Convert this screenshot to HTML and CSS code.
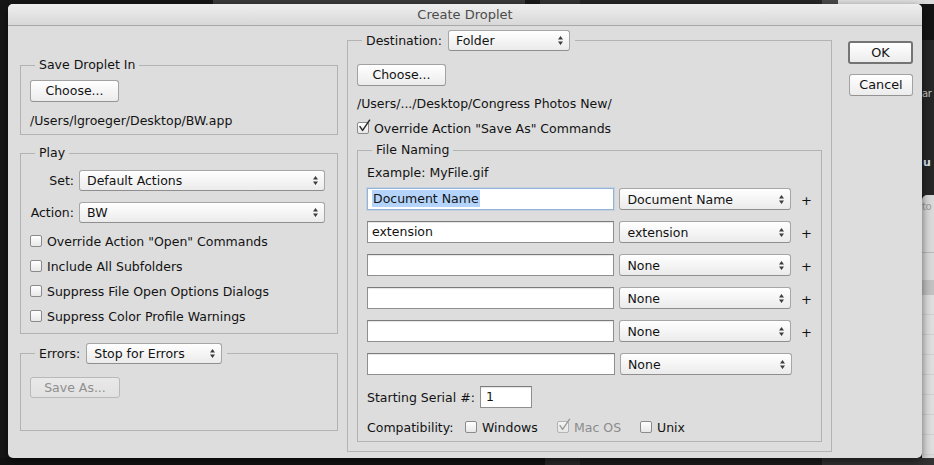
FILE: index.html
```html
<!DOCTYPE html>
<html>
<head>
<meta charset="utf-8">
<title>Create Droplet</title>
<link rel="stylesheet" href="styles.css">
</head>
<body>
<div class="dialog">
  <div class="titlebar">Create Droplet</div>
  <div class="content">
    <div class="leftcol">
      <fieldset class="group g-save">
        <legend class="lg">Save Droplet In</legend>
        <div class="btn choose">Choose...</div>
        <div class="line path1">/Users/lgroeger/Desktop/BW.app</div>
      </fieldset>

      <fieldset class="group g-play">
        <legend class="lg">Play</legend>
        <div class="frow r-set">
          <span class="flabel">Set:</span>
          <div class="popup p-set"><span class="val">Default Actions</span><svg class="updown" width="5" height="9" viewBox="0 0 5 9"><path d="M2.5 0L5 3.4H0z M2.5 9L5 5.6H0z" fill="#3c3c3c"/></svg></div>
        </div>
        <div class="frow r-action">
          <span class="flabel">Action:</span>
          <div class="popup p-set"><span class="val">BW</span><svg class="updown" width="5" height="9" viewBox="0 0 5 9"><path d="M2.5 0L5 3.4H0z M2.5 9L5 5.6H0z" fill="#3c3c3c"/></svg></div>
        </div>
        <div class="checks">
          <div class="crow"><span class="cb"></span><span>Override Action "Open" Commands</span></div>
          <div class="crow"><span class="cb"></span><span>Include All Subfolders</span></div>
          <div class="crow"><span class="cb"></span><span>Suppress File Open Options Dialogs</span></div>
          <div class="crow"><span class="cb"></span><span>Suppress Color Profile Warnings</span></div>
        </div>
      </fieldset>

      <fieldset class="group g-errors">
        <legend class="lg-ctl">
          <span class="elabel">Errors:</span>
          <div class="popup p-err"><span class="val">Stop for Errors</span><svg class="updown" width="5" height="9" viewBox="0 0 5 9"><path d="M2.5 0L5 3.4H0z M2.5 9L5 5.6H0z" fill="#3c3c3c"/></svg></div>
        </legend>
        <div class="btn saveas disabled">Save As...</div>
      </fieldset>
    </div>

    <div class="rightcol">
      <fieldset class="group g-dest">
        <legend class="lg-ctl">
          <span class="dlabel">Destination:</span>
          <div class="popup p-dest"><span class="val">Folder</span><svg class="updown" width="5" height="9" viewBox="0 0 5 9"><path d="M2.5 0L5 3.4H0z M2.5 9L5 5.6H0z" fill="#3c3c3c"/></svg></div>
        </legend>
        <div class="btn choose choose2">Choose...</div>
        <div class="line path2">/Users/.../Desktop/Congress Photos New/</div>
        <div class="crow saveas-row"><span class="cb checked"><svg class="tick" width="15" height="15" viewBox="0 0 15 15"><path d="M3 7.6L5.6 11.4L12.6 1.2" stroke="#2a2a2a" stroke-width="1.5" fill="none" stroke-linecap="round" stroke-linejoin="round"/></svg></span><span>Override Action "Save As" Commands</span></div>

        <fieldset class="group g-naming">
          <legend class="lg">File Naming</legend>
          <div class="line example">Example: MyFile.gif</div>

          <div class="nrow first">
            <div class="field focus"><span class="sel">Document Name</span></div>
            <div class="popup p-name"><span class="val">Document Name</span><svg class="updown" width="5" height="9" viewBox="0 0 5 9"><path d="M2.5 0L5 3.4H0z M2.5 9L5 5.6H0z" fill="#3c3c3c"/></svg></div>
            <span class="plus">+</span>
          </div>
          <div class="nrow">
            <div class="field">extension</div>
            <div class="popup p-name"><span class="val">extension</span><svg class="updown" width="5" height="9" viewBox="0 0 5 9"><path d="M2.5 0L5 3.4H0z M2.5 9L5 5.6H0z" fill="#3c3c3c"/></svg></div>
            <span class="plus">+</span>
          </div>
          <div class="nrow">
            <div class="field"></div>
            <div class="popup p-name"><span class="val">None</span><svg class="updown" width="5" height="9" viewBox="0 0 5 9"><path d="M2.5 0L5 3.4H0z M2.5 9L5 5.6H0z" fill="#3c3c3c"/></svg></div>
            <span class="plus">+</span>
          </div>
          <div class="nrow">
            <div class="field"></div>
            <div class="popup p-name"><span class="val">None</span><svg class="updown" width="5" height="9" viewBox="0 0 5 9"><path d="M2.5 0L5 3.4H0z M2.5 9L5 5.6H0z" fill="#3c3c3c"/></svg></div>
            <span class="plus">+</span>
          </div>
          <div class="nrow">
            <div class="field"></div>
            <div class="popup p-name"><span class="val">None</span><svg class="updown" width="5" height="9" viewBox="0 0 5 9"><path d="M2.5 0L5 3.4H0z M2.5 9L5 5.6H0z" fill="#3c3c3c"/></svg></div>
            <span class="plus">+</span>
          </div>
          <div class="nrow">
            <div class="field"></div>
            <div class="popup p-name"><span class="val">None</span><svg class="updown" width="5" height="9" viewBox="0 0 5 9"><path d="M2.5 0L5 3.4H0z M2.5 9L5 5.6H0z" fill="#3c3c3c"/></svg></div>
          </div>

          <div class="serial-row">
            <span class="slabel">Starting Serial #:</span>
            <div class="field serial">1</div>
          </div>
          <div class="compat-row">
            <span class="clabel">Compatibility:</span>
            <div class="citem ci-win"><span class="cb"></span><span>Windows</span></div>
            <div class="citem ci-mac disabled"><span class="cb checked dis"><svg class="tick" width="15" height="15" viewBox="0 0 15 15"><path d="M3 7.6L5.6 11.4L12.6 1.2" stroke="#9a9a9a" stroke-width="1.4" fill="none" stroke-linecap="round" stroke-linejoin="round"/></svg></span><span>Mac OS</span></div>
            <div class="citem ci-unix"><span class="cb"></span><span>Unix</span></div>
          </div>
        </fieldset>
      </fieldset>
    </div>

    <div class="buttons">
      <div class="btn ok">OK</div>
      <div class="btn cancel">Cancel</div>
    </div>
  </div>
</div>

<div class="backstrip">
  <div class="bs-top"></div>
  <div class="bs-black"></div>
  <div class="bs-dark">
    <span class="frag frag-ar">ar</span>
    <span class="frag frag-u">u</span>
  </div>
  <div class="bs-panel">
    <span class="frag frag-to">to</span>
    <div class="bs-line"></div>
    <div class="bs-band"></div>
    <div class="bs-row"></div>
    <div class="bs-row"></div>
    <div class="bs-row"></div>
    <div class="bs-row"></div>
    <div class="bs-row"></div>
    <div class="bs-row"></div>
    <div class="bs-row"></div>
    <div class="bs-row"></div>
  </div>
</div>
</body>
</html>
```

FILE: styles.css
```css
* { box-sizing: border-box; }

html, body { margin: 0; padding: 0; }

body {
  width: 934px;
  height: 465px;
  overflow: hidden;
  display: flex;
  align-items: flex-start;
  font-family: "DejaVu Sans", "Liberation Sans", sans-serif;
  font-size: 12.5px;
  color: #121212;
  background:
    linear-gradient(to right, #161616 0 213px, #3b3b3b 213px 525px, #1a1a1a 525px 540px, #353535 540px 580px, #272727 580px 822px, #4a4a4a 822px 838px, #e0e0e0 838px) top left / 100% 4px no-repeat,
    linear-gradient(to right, #121212 0 545px, #2a2a2a 545px 580px, #1c1c1c 580px 822px, #333 822px) bottom left / 100% 7px no-repeat,
    #161616;
}

/* dialog window */
.dialog {
  flex: none;
  margin: 4px 0 0 8px;
  width: 914px;
  height: 454px;
  background: #dddddd;
  border-radius: 5px;
  display: flex;
  flex-direction: column;
  box-shadow: 0 3px 10px rgba(0, 0, 0, 0.55);
  position: relative;
  z-index: 1;
}

.titlebar {
  height: 22px;
  border-bottom: 1px solid #a9a9a9;
  background: linear-gradient(#eeeeee, #d8d8d8);
  border-radius: 5px 5px 0 0;
  text-align: center;
  font-size: 13px;
  line-height: 21px;
  color: #4b4b4b;
}

.content {
  display: flex;
  align-items: flex-start;
  padding: 0 9px 0 12px;
}

.leftcol {
  width: 318px;
  padding-top: 31px;
}

.rightcol {
  width: 485px;
  margin-left: 9px;
  padding-top: 4px;
}

.buttons {
  width: 65px;
  margin-left: 16px;
  padding-top: 15px;
  display: flex;
  flex-direction: column;
  align-items: flex-start;
}

/* group boxes */
.group {
  margin: 0;
  padding: 0 9px;
  border: 1px solid #b3b3b3;
  min-width: 0;
  display: block;
}

.lg {
  margin-left: 5px;
  padding: 0 4px;
  height: 16px;
  line-height: 16px;
}

.lg-ctl {
  margin-left: 5px;
  padding: 0 5px 0 4px;
  height: 21px;
  display: flex;
  align-items: center;
}

.g-save { padding-bottom: 5px; }
.g-play { margin-top: 10px; padding-bottom: 9px; }
.g-errors { margin-top: 9px; padding-bottom: 32px; }
.g-dest { padding-bottom: 9px; }
.g-naming { margin-top: 6px; padding-bottom: 6px; }

.line {
  height: 16px;
  line-height: 16px;
  white-space: nowrap;
}

.path1 { margin-top: 11px; }
.path2 { margin-top: 10px; }
.example { margin-top: 7px; }

/* push buttons */
.btn {
  height: 22px;
  border: 1px solid #a2a2a2;
  border-bottom-color: #939393;
  border-radius: 3px;
  background: linear-gradient(#ffffff, #ececec);
  text-align: center;
  line-height: 20px;
  white-space: nowrap;
}

.choose { width: 89px; margin-top: 7px; }
.choose2 { margin-top: 13px; }

.saveas {
  width: 90px;
  height: 21px;
  line-height: 19px;
  margin-top: 13px;
}

.btn.disabled {
  color: #8f8f8f;
  border-color: #b9b9b9;
  background: linear-gradient(#e9e9e9, #e1e1e1);
}

.ok {
  width: 65px;
  height: 23px;
  border: 2px solid #747474;
  line-height: 19px;
  font-size: 12.8px;
}

.cancel {
  width: 64px;
  height: 22px;
  margin-top: 10px;
  margin-left: 1px;
  font-size: 12.8px;
}

/* popup menus */
.popup {
  display: flex;
  align-items: center;
  height: 21px;
  border: 1px solid #a6a6a6;
  border-bottom-color: #8f8f8f;
  border-radius: 3px;
  background: linear-gradient(#ffffff, #ebebeb);
  padding: 0 6px 0 7px;
  white-space: nowrap;
}

.popup .val { flex: 1; }
.updown { flex: none; }

.p-set { width: 246px; }
.p-err { width: 136px; margin-left: 6px; }
.p-dest { width: 122px; margin-left: 6px; }
.p-name { width: 172px; height: 22px; margin-left: 5px; }

.frow {
  display: flex;
  align-items: center;
}

.r-set { margin-top: 9px; }
.r-action { margin-top: 11px; }

.flabel {
  flex: none;
  width: 44px;
  margin-right: 5px;
  display: flex;
  justify-content: flex-end;
  white-space: nowrap;
}

.elabel { white-space: nowrap; }
.dlabel { white-space: nowrap; }

/* checkboxes */
.checks { margin-top: 10px; }

.crow {
  display: flex;
  align-items: center;
  height: 16px;
  white-space: nowrap;
}

.crow + .crow { margin-top: 9px; }

.cb {
  flex: none;
  width: 12px;
  height: 12px;
  margin-right: 5px;
  border: 1px solid #8b8b8b;
  border-radius: 2px;
  background: linear-gradient(#ffffff, #e8e8e8);
  position: relative;
}

.cb.dis {
  border-color: #b3b3b3;
  background: linear-gradient(#f4f4f4, #e6e6e6);
}

.tick {
  position: absolute;
  left: -1px;
  top: -4px;
}

.saveas-row { margin-top: 8px; }

/* file naming rows */
.nrow {
  display: flex;
  align-items: center;
  margin-top: 11px;
}

.nrow.first { margin-top: 7px; }

.field {
  width: 248px;
  height: 22px;
  border: 1px solid #8f8f8f;
  border-top-color: #7b7b7b;
  background: #ffffff;
  box-shadow: inset 0 1px 1px rgba(0, 0, 0, 0.1);
  padding-left: 4px;
  line-height: 20px;
  white-space: nowrap;
}

.field.focus {
  border-color: #95b3d8;
  box-shadow: 0 0 0 1px rgba(150, 185, 225, 0.35);
}

.sel {
  background: #b4d4fc;
  padding: 1px 1px;
}

.plus {
  margin-left: 10px;
  margin-top: 3px;
  font-size: 13px;
}

.serial-row {
  display: flex;
  align-items: center;
  margin-top: 11px;
}

.slabel {
  width: 113px;
  white-space: nowrap;
}

.field.serial {
  width: 52px;
  padding-left: 5px;
}

.compat-row {
  display: flex;
  align-items: center;
  height: 16px;
  margin-top: 11px;
  white-space: nowrap;
}

.clabel { width: 98px; }

.citem {
  display: flex;
  align-items: center;
}

.ci-win { width: 92px; }
.ci-mac { width: 83px; }

.citem.disabled { color: #8c8c8c; }

/* window behind the dialog, peeking out on the right */
.backstrip {
  flex: none;
  width: 12px;
  height: 465px;
  display: flex;
  flex-direction: column;
  overflow: hidden;
}

.bs-top { height: 4px; background: #dcdcdc; }
.bs-black { height: 36px; background: #141414; }

.bs-dark {
  height: 155px;
  background: #272727;
  position: relative;
}

.frag {
  position: absolute;
  white-space: nowrap;
  font-size: 10px;
  letter-spacing: -0.5px;
}

.frag-ar { left: 0; top: 48px; color: #c9c9c9; }
.frag-u { left: 1px; top: 116px; color: #d8e4f0; font-weight: bold; font-size: 11px; }

.bs-panel {
  height: 263px;
  background: #dadada;
  border-radius: 5px 0 0 0;
  position: relative;
  padding-top: 57px;
}

.frag-to { left: 0; top: 6px; color: #9a9a9a; }

.bs-line { height: 1px; background: #b9b9b9; }
.bs-band { height: 15px; margin-top: 27px; background: #c2c2c2; }
.bs-row { height: 20px; border-bottom: 1px solid #d0d0d0; background: #dedede; }
```
